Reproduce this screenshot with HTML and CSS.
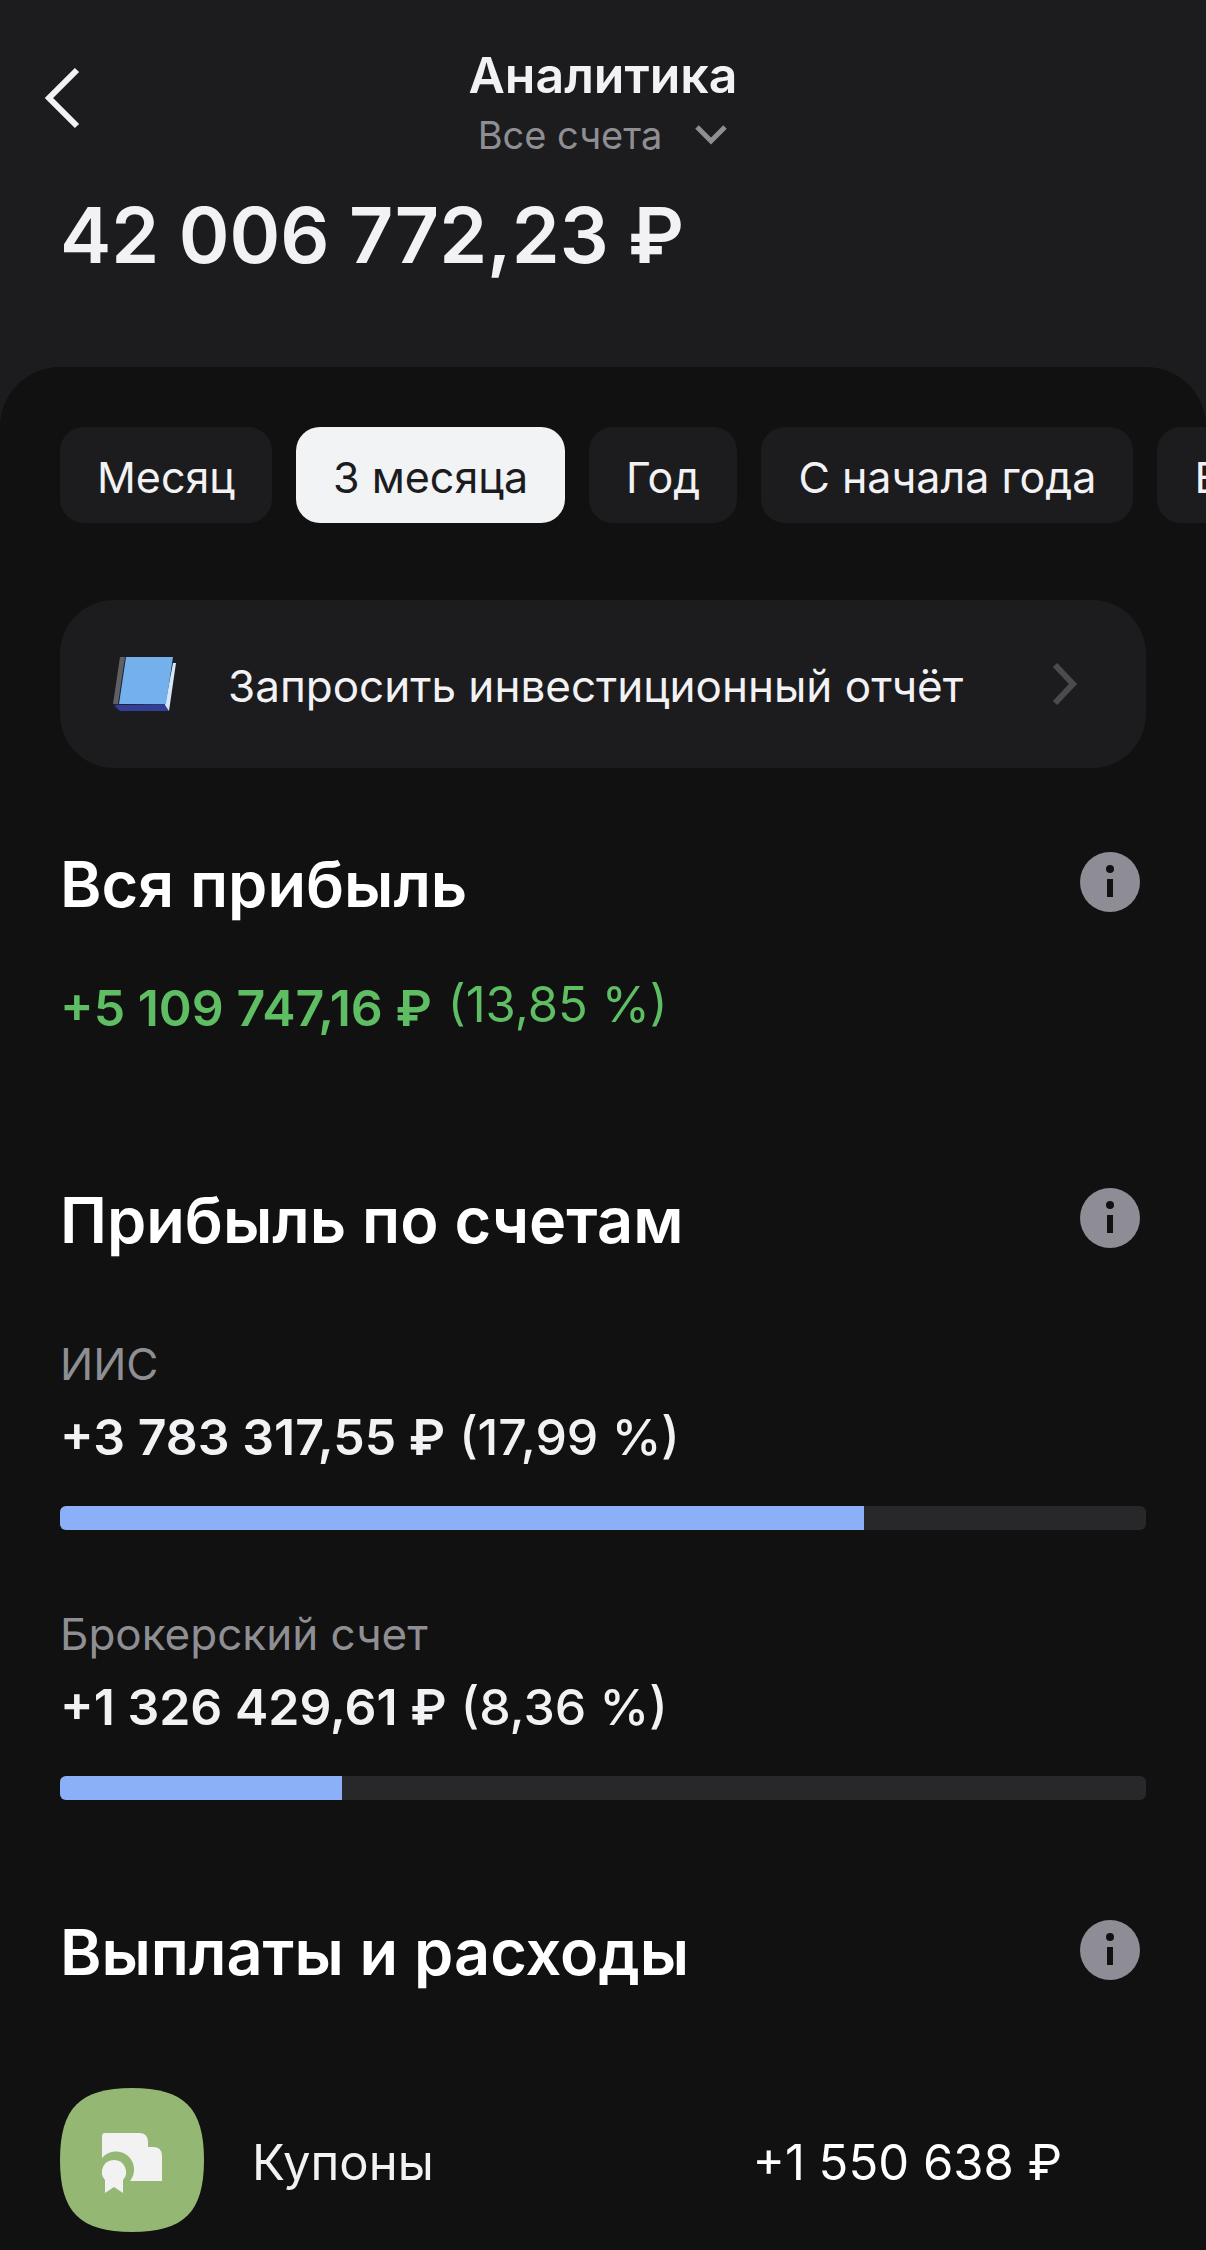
FILE: index.html
```
<!DOCTYPE html>
<html lang="ru">
<head>
  <meta charset="UTF-8" />
  <meta name="viewport" content="width=device-width, initial-scale=1.0"/>
  <title>Аналитика</title>
  <link rel="stylesheet" href="styles.css">
</head>
<body>

  <header class="header">
    <div class="topbar">
      <button class="back" type="button" aria-label="Назад">
        <svg width="36" height="62" viewBox="0 0 36 62" fill="none" stroke="#f2f2f4" stroke-width="6">
          <path d="M33 3 L5 31 L33 59"/>
        </svg>
      </button>
      <div class="heading">
        <h1>Аналитика</h1>
        <button class="account" type="button">
          Все счета
          <svg width="34" height="22" viewBox="0 0 34 22" fill="none" stroke="#8e8e93" stroke-width="5">
            <path d="M3 3 L17 17 L31 3"/>
          </svg>
        </button>
      </div>
    </div>
    <p class="total">42&nbsp;006&nbsp;772,23&nbsp;₽</p>
  </header>

  <main class="sheet">
    <div class="periods">
      <button type="button">Месяц</button>
      <button type="button" class="active">3 месяца</button>
      <button type="button">Год</button>
      <button type="button">С начала года</button>
      <button type="button">Все время</button>
    </div>

    <a class="report" href="#report">
      <svg class="book" width="66" height="56" viewBox="0 0 66 56">
        <path d="M8 1 L15 1 L8 48 L10 55 L4 54 Q0 52 1 47 Z" fill="#1b2038"/>
        <path d="M8 1 L13 1 L6 48 L1 48 Z" fill="#606062"/>
        <path d="M3 49 L54 48 L57 55 L8 55 L4 51 Z" fill="#323f94"/>
        <path d="M61 7 L64 7 L57 55 L53 49 Z" fill="#d5e8fa"/>
        <path d="M14 1 L61 1 L54 48 L7 48 Z" fill="#74b0ec"/>
      </svg>
      <span>Запросить инвестиционный отчёт</span>
      <svg class="arrow" width="26" height="44" viewBox="0 0 26 44" fill="none" stroke="#4b4b4f" stroke-width="6">
        <path d="M3 3 L21 22 L3 41"/>
      </svg>
    </a>

    <section class="profit">
      <div class="section-head">
        <h2>Вся прибыль</h2>
        <button class="info" type="button" aria-label="Подробнее">
          <svg width="60" height="60" viewBox="0 0 60 60">
            <circle cx="30" cy="30" r="30" fill="#8e8d95"/>
            <circle cx="30" cy="17" r="4" fill="#111"/>
            <rect x="27" y="27" width="6" height="18" fill="#111"/>
          </svg>
        </button>
      </div>
      <p class="amount green"><b>+5&nbsp;109&nbsp;747,16&nbsp;₽</b> <small>(13,85&nbsp;%)</small></p>
    </section>

    <section class="accounts">
      <div class="section-head">
        <h2>Прибыль по счетам</h2>
        <button class="info" type="button" aria-label="Подробнее">
          <svg width="60" height="60" viewBox="0 0 60 60">
            <circle cx="30" cy="30" r="30" fill="#8e8d95"/>
            <circle cx="30" cy="17" r="4" fill="#111"/>
            <rect x="27" y="27" width="6" height="18" fill="#111"/>
          </svg>
        </button>
      </div>
      <div class="account-row">
        <p class="label">ИИС</p>
        <p class="amount"><b>+3&nbsp;783&nbsp;317,55&nbsp;₽</b> <span>(17,99&nbsp;%)</span></p>
        <div class="bar"><div class="fill" style="width: 74%"></div></div>
      </div>
      <div class="account-row">
        <p class="label">Брокерский счет</p>
        <p class="amount"><b>+1&nbsp;326&nbsp;429,61&nbsp;₽</b> <span>(8,36&nbsp;%)</span></p>
        <div class="bar"><div class="fill" style="width: 26%"></div></div>
      </div>
    </section>

    <section class="payments">
      <div class="section-head">
        <h2>Выплаты и расходы</h2>
        <button class="info" type="button" aria-label="Подробнее">
          <svg width="60" height="60" viewBox="0 0 60 60">
            <circle cx="30" cy="30" r="30" fill="#8e8d95"/>
            <circle cx="30" cy="17" r="4" fill="#111"/>
            <rect x="27" y="27" width="6" height="18" fill="#111"/>
          </svg>
        </button>
      </div>
      <div class="payment">
        <svg width="144" height="144" viewBox="0 0 144 144">
          <path fill="#94b774" d="M0 72 C0 20 20 0 72 0 C124 0 144 20 144 72 C144 124 124 144 72 144 C20 144 0 124 0 72 Z"/>
          <path fill="#f2f2f2" d="M42 48 Q42 45 45 45 H79 Q88 45 88 54 V59 H93 Q102 59 102 68 V93 H70 A18 18 0 0 0 42 70 Z"/>
          <path fill="#f2f2f2" d="M54 72 A12 12 0 0 1 63 92 V105 L54 99 L45 105 V92 A12 12 0 0 1 54 72 Z"/>
        </svg>
        <span class="name">Купоны</span>
        <span class="sum">+1&nbsp;550&nbsp;638&nbsp;₽</span>
      </div>
    </section>
  </main>

</body>
</html>
```
FILE: styles.css
```
* {
  box-sizing: border-box;
  margin: 0;
  padding: 0;
}

body {
  background-color: #1c1c1e;
  color: #f2f2f4;
  font-family: Inter, "Liberation Sans", sans-serif;
  min-height: 100vh;
  display: flex;
  flex-direction: column;
  overflow-x: hidden;
}

button {
  background: none;
  border: none;
  color: inherit;
  font: inherit;
  cursor: pointer;
}

svg {
  display: block;
  flex-shrink: 0;
}

.header {
  padding: 45px 60px 84px;
}

.topbar {
  display: grid;
  grid-template-columns: 1fr auto 1fr;
  align-items: start;
  margin: 0 -16px 28px;
}

.back {
  width: 60px;
  height: 106px;
}

.heading {
  display: flex;
  flex-direction: column;
  align-items: center;
  gap: 6px;
}

.heading h1 {
  font-size: 50px;
  line-height: 60px;
  font-weight: 600;
}

.account {
  display: flex;
  align-items: center;
  gap: 32px;
  font-size: 38px;
  line-height: 48px;
  color: #8e8e93;
}

.total {
  font-size: 77px;
  line-height: 96px;
  font-weight: 600;
}

.sheet {
  flex: 1;
  background-color: #111;
  border-radius: 60px 60px 0 0;
  padding: 60px 60px 18px;
}

.periods {
  display: flex;
  gap: 24px;
  margin-right: -60px;
  margin-bottom: 77px;
  overflow: hidden;
}

.periods button {
  flex-shrink: 0;
  height: 96px;
  padding: 4px 37px 0;
  border-radius: 24px;
  background-color: #1c1c1e;
  font-size: 43px;
  white-space: nowrap;
}

.periods .active {
  background-color: #f2f3f5;
  color: #1c1c1e;
}

.report {
  display: flex;
  align-items: center;
  height: 168px;
  padding: 0 68px 0 52px;
  margin-bottom: 75px;
  border-radius: 54px;
  background-color: #1c1c1e;
  color: inherit;
  font-size: 44px;
  text-decoration: none;
}

.report span {
  flex: 1;
  margin-left: 50px;
  padding-top: 4px;
}

.section-head {
  display: flex;
  align-items: center;
  justify-content: space-between;
  padding-right: 6px;
}

.section-head h2 {
  padding-top: 4px;
  color: #fff;
  font-size: 63px;
  line-height: 74px;
  font-weight: 600;
}

.profit {
  margin-bottom: 141px;
}

.profit .section-head {
  margin-bottom: 57px;
}

.amount {
  font-size: 50px;
  line-height: 60px;
}

.amount b {
  font-weight: 600;
}

.amount span {
  font-weight: 500;
}

.green {
  display: flex;
  gap: 16px;
  color: #5fbd63;
}

.green small {
  font-size: 49px;
  line-height: 54px;
}

.accounts {
  display: flex;
  flex-direction: column;
  gap: 77px;
  margin-bottom: 111px;
}

.label {
  margin-bottom: 16px;
  padding-top: 3px;
  font-size: 44px;
  line-height: 54px;
  color: #8e8e93;
}

.accounts .account-row + .account-row .label {
  padding-top: 0;
}

.bar {
  height: 24px;
  margin-top: 39px;
  border-radius: 6px;
  background-color: #28282a;
  overflow: hidden;
}

.fill {
  height: 100%;
  background-color: #8bb0f8;
}

.payments .section-head {
  margin-bottom: 99px;
}

.payment {
  display: flex;
  align-items: center;
  padding-right: 84px;
  font-size: 49px;
}

.payment span {
  padding-top: 4px;
}

.payment .name {
  flex: 1;
  margin-left: 48px;
}

.payment .sum {
  color: #fff;
}
```
